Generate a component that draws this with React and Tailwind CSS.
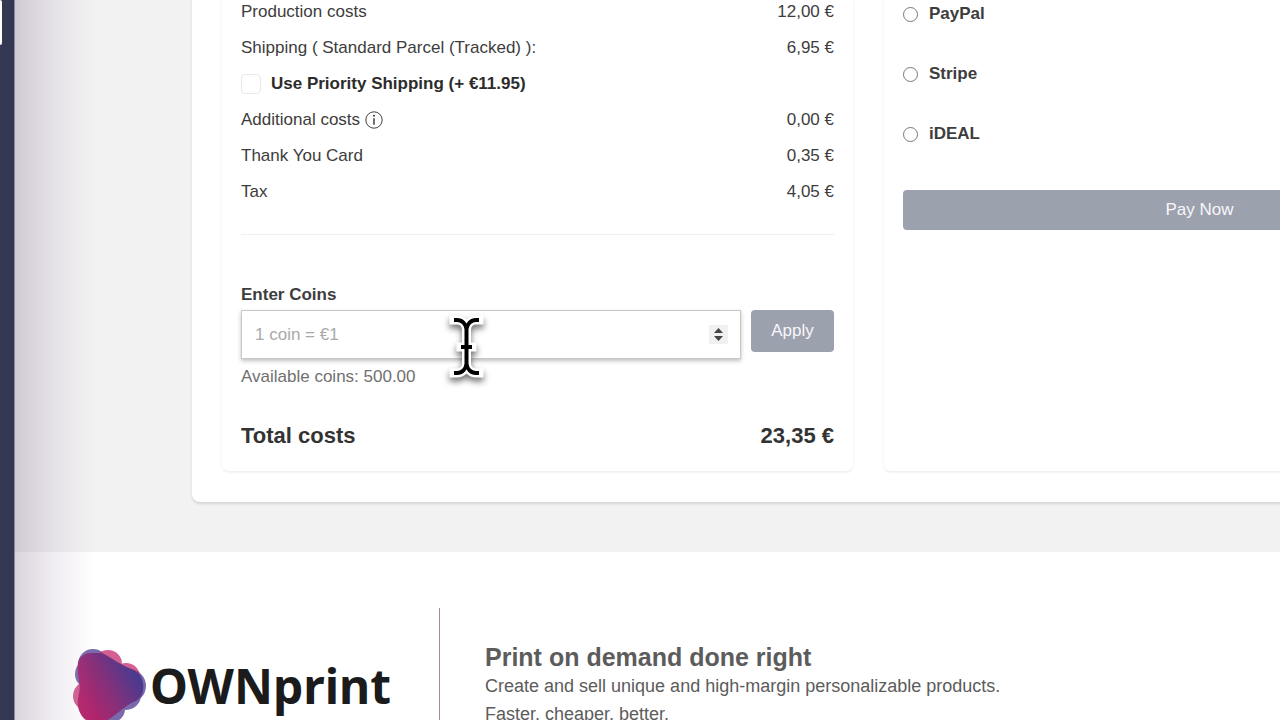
import React from "react";

const costs = [
  { id: "production", label: "Production costs", value: "12,00 €" },
  {
    id: "shipping",
    label: "Shipping ( Standard Parcel (Tracked) ):",
    value: "6,95 €",
  },
  { id: "priority", label: "Use Priority Shipping (+ €11.95)", checkbox: true },
  { id: "additional", label: "Additional costs", value: "0,00 €", info: true },
  { id: "card", label: "Thank You Card", value: "0,35 €" },
  { id: "tax", label: "Tax", value: "4,05 €" },
];

const methods = ["PayPal", "Stripe", "iDEAL"];

const InfoIcon = () => (
  <svg className="ml-1 h-5 w-5" viewBox="0 0 20 20" fill="none">
    <circle cx="10" cy="10" r="8.2" stroke="#444" strokeWidth="1" />
    <circle cx="10" cy="5.8" r="1" fill="#333" />
    <path d="M10 8.200V14.800" stroke="#333" strokeWidth="1.4" />
  </svg>
);

const CostRow = ({ item }) => {
  if (item.checkbox) {
    return (
      <div className="flex h-9 items-center">
        <input
          id={item.id}
          type="checkbox"
          className="h-5 w-5 appearance-none rounded-sm border border-[#e8e8e8] bg-white"
        />
        <label htmlFor={item.id} className="pl-[10px] font-bold text-[#2c2c2c]">
          {item.label}
        </label>
      </div>
    );
  }
  return (
    <div className="flex h-9 items-center justify-between">
      <span className="flex items-center">
        {item.label}
        {item.info && <InfoIcon />}
      </span>
      <span>{item.value}</span>
    </div>
  );
};

const Costs = () => (
  <section className="rounded-lg border border-[#f8f8f8] border-b-[#f0f0f0] px-[19px] pb-5 shadow-xs">
    {costs.map((item) => (
      <CostRow key={item.id} item={item} />
    ))}
    <hr className="mt-6 border-[#f0f0f0]" />
    <label htmlFor="coins" className="mt-12 block font-bold leading-6">
      Enter Coins
    </label>
    <div className="mt-[3px] flex items-start gap-[10px]">
      <div className="relative flex-1">
        <input
          id="coins"
          type="text"
          inputMode="numeric"
          placeholder="1 coin = €1"
          className="h-[49px] w-full border border-[#c8c8c8] bg-white px-[13px] shadow-[0_2px_4px_rgba(0,0,0,0.25)] placeholder:text-[#a9a9a9]"
        />
        <svg
          className="absolute right-[13px] top-[15px] h-[19px] w-[19px] bg-[#f0f0f0]"
          viewBox="0 0 19 19"
          fill="#444"
        >
          <path d="M5 8L9.5 3L14 8ZM5 11H14L9.5 16Z" />
        </svg>
      </div>
      <button className="h-[42px] w-[83px] rounded bg-[#9ca1ae] text-[#f7f7f9]">
        Apply
      </button>
    </div>
    <p className="mt-[6px] leading-6 text-[#707070]">Available coins: 500.00</p>
    <div className="mt-8 flex items-center justify-between text-[22px] font-bold leading-[30px] text-[#333]">
      <span>Total costs</span>
      <span>23,35 €</span>
    </div>
  </section>
);

const Payment = () => (
  <section className="rounded-lg border border-[#f8f8f8] border-b-[#f0f0f0] px-[19px] shadow-xs">
    <div className="flex flex-col gap-5">
      {methods.map((method) => (
        <label key={method} className="flex h-10 items-center font-bold">
          <input
            type="radio"
            name="method"
            className="mr-[11px] h-[15px] w-[15px] appearance-none rounded-full border border-[#777] bg-white"
          />
          {method}
        </label>
      ))}
    </div>
    <button className="mt-9 h-10 w-full rounded bg-[#9ca1ae] text-[#f7f7f9]">
      Pay Now
    </button>
  </section>
);

const Logo = () => (
  <a href="#" className="flex items-center gap-1">
    <svg className="h-[76px] w-[73px]" viewBox="0 0 73 76">
      <defs>
        <linearGradient id="blob" x1="0.1" y1="0.85" x2="0.95" y2="0.35">
          <stop offset="0.05" stopColor="#b5246a" />
          <stop offset="0.5" stopColor="#85307a" />
          <stop offset="1" stopColor="#463b90" />
        </linearGradient>
      </defs>
      {/* blue lobes */}
      <g opacity="0.8" fill="#5b4597">
        <circle cx="20" cy="16" r="15" />
        <circle cx="17" cy="26" r="15" />
        <circle cx="56" cy="38" r="17" />
        <circle cx="53" cy="47" r="15" />
        <circle cx="39" cy="61" r="13" />
      </g>
      {/* pink lobes */}
      <g opacity="0.75" fill="#c52b6c">
        <circle cx="35" cy="16" r="14" />
        <circle cx="53" cy="29" r="14" />
        <circle cx="15" cy="48" r="15" />
        <circle cx="22" cy="59" r="16" />
      </g>
      <path
        d="M8 9C13 4 18 5 26 5C34 6 40 12 48 16C56 21 66 22 69 31C72 40 70 49 63 53C53 57 48 63 39 69C30 77 13 76 8 66C3 58 5 52 6 45C8 36 5 31 5 23C4 17 5 12 8 9Z"
        fill="url(#blob)"
      />
    </svg>
    <span className="font-['Noto_Sans'] text-[48px] font-bold leading-[60px] text-[#1b1b1b]">
      OWNprint
    </span>
  </a>
);

const beam =
  "M5 6H8C13 6 17 10 17.500 15C18 10 22 6 27 6H30M17.500 13V53M12 33H23M5 59H8C13 59 17 55 17.500 50C18 55 22 59 27 59H30";

const Cursor = () => (
  <svg
    className="pointer-events-none absolute left-[449px] top-[314px] h-[66px] w-[36px] overflow-visible drop-shadow-[0_4px_3px_rgba(0,0,0,0.55)]"
    viewBox="0 0 36 66"
    fill="none"
  >
    <path d={beam} stroke="#fff" strokeWidth="9" strokeLinecap="square" />
    <path d={beam} stroke="#000" strokeWidth="4" />
  </svg>
);

export default function App() {
  return (
    <div className="relative flex h-screen overflow-hidden bg-white font-['Liberation_Sans',sans-serif] text-[17px] text-[#3d3d3d]">
      <aside className="w-[15px] shrink-0 border-r border-[#8a8ba3] bg-[#353852]">
        <div className="h-[45px] w-[2px] rounded-r bg-white" />
      </aside>
      <div className="relative min-w-0 flex-1">
        <main className="bg-[#f2f2f2] pb-[50px] pl-[177px]">
          <div className="-mt-[7px] grid min-w-[1353px] grid-cols-2 gap-[29px] rounded-lg bg-white px-[29px] pb-[30px] shadow-[0_2px_3px_rgba(0,0,0,0.12)]">
            <Costs />
            <Payment />
          </div>
        </main>
        <footer className="flex bg-white pl-[58px] pt-14">
          <div className="w-[366px] shrink-0 pt-10">
            <Logo />
          </div>
          <div className="border-l border-[#a58ba0] pl-[45px] pt-[34px] text-[#5c5c5c]">
            <h2 className="text-[25px] font-bold leading-[30px]">
              Print on demand done right
            </h2>
            <p className="text-[18px] leading-7">
              Create and sell unique and high-margin personalizable products.
              <br />
              Faster, cheaper, better.
            </p>
          </div>
        </footer>
        <div className="pointer-events-none absolute inset-y-0 left-0 w-20 bg-linear-to-r from-[#6e5078]/25 via-[#a08caf]/15 to-transparent" />
      </div>
      <Cursor />
    </div>
  );
}
